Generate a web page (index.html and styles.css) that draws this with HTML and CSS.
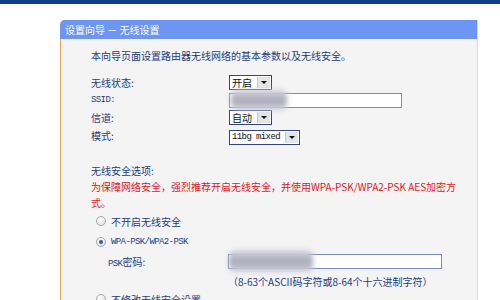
FILE: index.html
```html
<!DOCTYPE html>
<html lang="zh-CN">

<head>
    <title>设置向导 - 无线设置</title>
    <link rel="stylesheet" href="styles.css">
</head>

<body>
    <div class="top-bar"></div>

    <div class="panel">
        <div class="panel-title">设置向导 － 无线设置</div>
        <div class="panel-body">
            <p class="intro">本向导页面设置路由器无线网络的基本参数以及无线安全。</p>

            <div class="form-grid">
                <div class="label">无线状态:</div>
                <div><span class="fake-select"><span class="value">开启</span><span class="arrow"></span></span></div>

                <div class="label latin">SSID:</div>
                <div class="blur-wrap">
                    <span class="text-input ssid-input"></span>
                    <span class="blur-blob ssid-blob"></span>
                </div>

                <div class="label">信道:</div>
                <div><span class="fake-select"><span class="value">自动</span><span class="arrow"></span></span></div>

                <div class="label">模式:</div>
                <div><span class="fake-select"><span class="value latin">11bg mixed</span><span class="arrow"></span></span></div>
            </div>

            <div class="section-title">无线安全选项:</div>
            <div class="warning">为保障网络安全，强烈推荐开启无线安全，并使用WPA-PSK/WPA2-PSK AES加密方式。</div>

            <div class="radio-row first">
                <span class="radio"></span>
                <span>不开启无线安全</span>
            </div>
            <div class="radio-row second">
                <span class="radio checked"></span>
                <span class="latin">WPA-PSK/WPA2-PSK</span>
            </div>

            <div class="psk-row">
                <div class="psk-label"><span class="latin">PSK</span>密码:</div>
                <div>
                    <div class="blur-wrap">
                        <span class="text-input psk-input"></span>
                        <span class="blur-blob psk-blob"></span>
                    </div>
                    <div class="hint">（8-63个ASCII码字符或8-64个十六进制字符）</div>
                </div>
            </div>

            <div class="radio-row third">
                <span class="radio"></span>
                <span>不修改无线安全设置</span>
            </div>
        </div>
    </div>
</body>

</html>
```

FILE: styles.css
```css
body {
    margin: 0;
    padding: 0;
    background-color: white;
    font-family: "Noto Sans CJK SC", sans-serif;
    font-size: 10px;
    color: #1f3c7c;
    overflow: hidden;
}

.top-bar {
    height: 4px;
    background-color: #0c3e8e;
}

.panel {
    width: 416px;
    margin: 16px 0 0 60px;
    border-left: 1px solid #f0a35a;
    border-right: 1px solid #f6d6b8;
    border-top-left-radius: 5px;
    background-color: #f4f4f4;
    height: 300px;
}

.panel-title {
    height: 19px;
    line-height: 19px;
    padding-left: 5px;
    background-color: #6d95f3;
    color: white;
    border-top-left-radius: 5px;
    margin-left: -1px;
}

.panel-body {
    padding: 10px 0 0 30px;
}

.latin {
    font-family: "Liberation Mono", monospace;
    font-size: 9px;
    letter-spacing: -0.6px;
}

.intro {
    margin: 0 0 12px 0;
    line-height: 14px;
}

.form-grid {
    display: grid;
    grid-template-columns: 138px 1fr;
    grid-auto-rows: 15px;
    row-gap: 2.7px;
    align-items: center;
}

.label {
    line-height: 15px;
}

.fake-select {
    display: inline-flex;
    align-items: stretch;
    height: 13px;
    border: 1px solid #34467f;
    background-color: white;
    color: #111;
    line-height: 13px;
}

.fake-select .value {
    padding: 0 4px 0 2px;
}

.fake-select .arrow {
    width: 12px;
    margin: 1px;
    background-color: #e3e3e8;
    border-left: 1px solid #c8c8d4;
    position: relative;
}

.fake-select .arrow::after {
    content: "";
    position: absolute;
    left: 3px;
    top: 4px;
    border-left: 3px solid transparent;
    border-right: 3px solid transparent;
    border-top: 3px solid #111;
}

.text-input {
    display: block;
    height: 13px;
    border: 1px solid #7d8cc6;
    background-color: white;
}

.ssid-input {
    width: 171px;
}

.psk-input {
    width: 212px;
}

.blur-wrap {
    position: relative;
}

.blur-blob {
    position: absolute;
    background: linear-gradient(#d6d6e6, #a9a9b4 55%, #d6d6e6);
    filter: blur(2.5px);
    border-radius: 6px;
}

.ssid-blob {
    left: 2px;
    top: -3px;
    width: 56px;
    height: 20px;
}

.psk-blob {
    left: 1px;
    top: -4px;
    width: 84px;
    height: 22px;
}

.section-title {
    margin-top: 20px;
    line-height: 16px;
}

.warning {
    width: 366px;
    color: #e1161c;
    line-height: 16px;
}

.radio-row {
    display: flex;
    align-items: center;
    gap: 5px;
    margin-left: 5px;
    height: 16px;
}

.radio-row.first {
    margin-top: 2px;
}

.radio-row.second {
    margin-top: 5px;
}

.radio-row.third {
    margin-top: 2px;
}

.radio {
    width: 8px;
    height: 8px;
    border-radius: 50%;
    border: 1px solid #a9a9a9;
    background: radial-gradient(circle at 40% 35%, #ffffff, #d8d8d8);
    position: relative;
}

.radio.checked::after {
    content: "";
    position: absolute;
    left: 2px;
    top: 2px;
    width: 4px;
    height: 4px;
    border-radius: 50%;
    background-color: #2f5aa8;
}

.psk-row {
    display: grid;
    grid-template-columns: 120px 1fr;
    margin: 4px 0 0 17px;
}

.psk-label {
    line-height: 15px;
    margin-top: 0;
}

.hint {
    margin-top: 6px;
    line-height: 14px;
}
```
